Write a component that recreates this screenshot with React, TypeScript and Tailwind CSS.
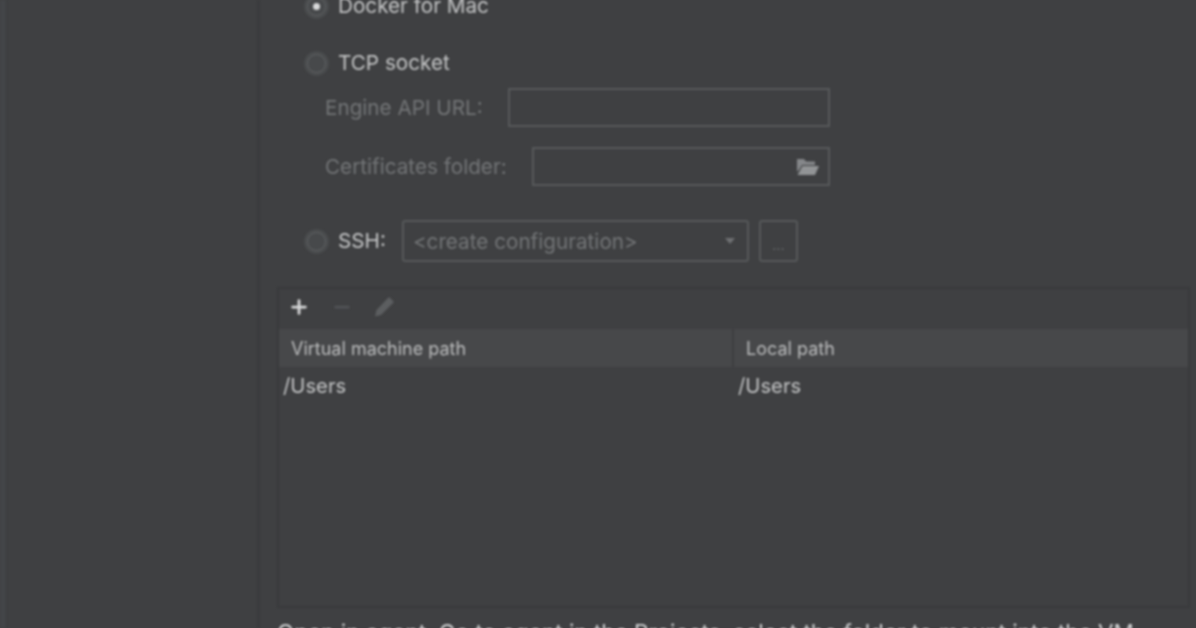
import { Plus, Minus } from 'lucide-react';

function Radio({ checked }: { checked?: boolean }) {
  return (
    <div className="w-[25px] h-[25px] flex-none rounded-full border-[3px] border-[#4a4c4e] flex items-center justify-center">
      <div className="w-[19px] h-[19px] rounded-full border border-[#636567] bg-[#47494b] flex items-center justify-center">
        {checked && <div className="w-[7px] h-[7px] rounded-full bg-[#d8d9da]" />}
      </div>
    </div>
  );
}

function FolderIcon() {
  return (
    <svg width="24" height="20" viewBox="0 0 24 20" className="flex-none">
      <path d="M1 2h7l2 2.500h9V8H6L3.500 12 1 15z" fill="#85878a" />
      <path d="M6.500 9H23l-4 9H1.500z" fill="#929496" />
    </svg>
  );
}

function PencilIcon() {
  return (
    <svg width="26" height="26" viewBox="0 0 26 26" className="flex-none">
      <path d="M18 3l5 5-13 13-6 1.500L5.500 16z" fill="#5c5e60" />
    </svg>
  );
}

export default function App() {
  return (
    <div className="w-[1196px] h-[628px] overflow-hidden bg-[#3f4042]">
      <div className="h-full flex font-['Inter',sans-serif] blur-[0.9px]">
        {/* Sidebar */}
        <div className="w-[260px] flex-none flex border-r-[3px] border-[#3a3b3d]">
          <div className="w-[7px] flex-none bg-[#434548] border-r border-[#3b3c3e]" />
        </div>

        {/* Settings panel */}
        <div className="flex-1 min-w-0 flex flex-col pl-[17px] pr-[6px]">
          <div className="pl-[27px] flex flex-col">
            <div className="mt-[-6px] h-[24px] flex items-center gap-[9px]">
              <Radio checked />
              <span className="text-[20.7px] text-[#c4c5c6]">Docker for Mac</span>
            </div>

            <div className="mt-[33px] h-[24px] flex items-center gap-[9px]">
              <Radio />
              <span className="text-[20.7px] text-[#c4c5c6]">TCP socket</span>
            </div>

            <div className="mt-[13px] ml-[21px] w-[505px] h-[39px] flex items-center gap-[25px]">
              <span className="pt-px text-[20.7px] text-[#737577] whitespace-nowrap">Engine API URL:</span>
              <div className="flex-1 h-full border-2 border-[#57595b]" />
            </div>

            <div className="mt-[20px] ml-[21px] w-[505px] h-[39px] flex items-center gap-[25px]">
              <span className="pt-px text-[20.7px] text-[#737577] whitespace-nowrap">Certificates folder:</span>
              <div className="flex-1 h-full border-2 border-[#57595b] flex items-center justify-end pr-[8px]">
                <FolderIcon />
              </div>
            </div>

            <div className="mt-[34px] h-[42px] flex items-center gap-[9px]">
              <Radio />
              <span className="text-[20.7px] text-[#c4c5c6]">SSH:</span>
              <div className="ml-[7px] w-[347px] h-full border-2 border-[#57595b] rounded-[3px] flex items-center justify-between pl-[9px] pr-[11px]">
                <span className="pt-px text-[20.7px] text-[#737577] whitespace-nowrap">&lt;create configuration&gt;</span>
                <svg width="12" height="8" viewBox="0 0 12 8">
                  <path d="M1 1h10L6 7z" fill="#6f7173" />
                </svg>
              </div>
              <div className="ml-[1px] w-[39px] h-full border-2 border-[#57595b] rounded-[3px] flex items-end justify-center pb-[8px]">
                <span className="text-[14px] leading-none text-[#6f7173]">...</span>
              </div>
            </div>
          </div>

          {/* Path mappings table */}
          <div className="mt-[25px] h-[321px] flex-none border-2 border-[#393a3c] flex flex-col">
            <div className="h-[40px] flex-none flex items-center gap-[21px] pl-[9px] pb-[4px]">
              <Plus size={22} strokeWidth={3} className="text-[#d9dadb]" />
              <Minus size={22} strokeWidth={3} className="text-[#515356]" />
              <div className="ml-[-3px]">
                <PencilIcon />
              </div>
            </div>
            <div className="h-[38px] flex-none flex bg-[#47484a] text-[18px] text-[#bcbdbe]">
              <div className="w-[455px] flex-none flex items-center pl-[12px] border-r-2 border-[#3d3e40]">Virtual machine path</div>
              <div className="flex-1 flex items-center pl-[12px]">Local path</div>
            </div>
            <div className="h-[38px] flex-none flex text-[20.3px] text-[#c4c5c6]">
              <div className="w-[455px] flex-none flex items-center pl-[4px]">/Users</div>
              <div className="flex-1 flex items-center pl-[4px]">/Users</div>
            </div>
          </div>

          <p className="mt-[10px] text-[22.5px] leading-[30px] text-[#d0d1d2] whitespace-nowrap">
            Open in agent. Go to agent in the Projects, select the folder to mount into the VM
          </p>
        </div>
      </div>
    </div>
  );
}
